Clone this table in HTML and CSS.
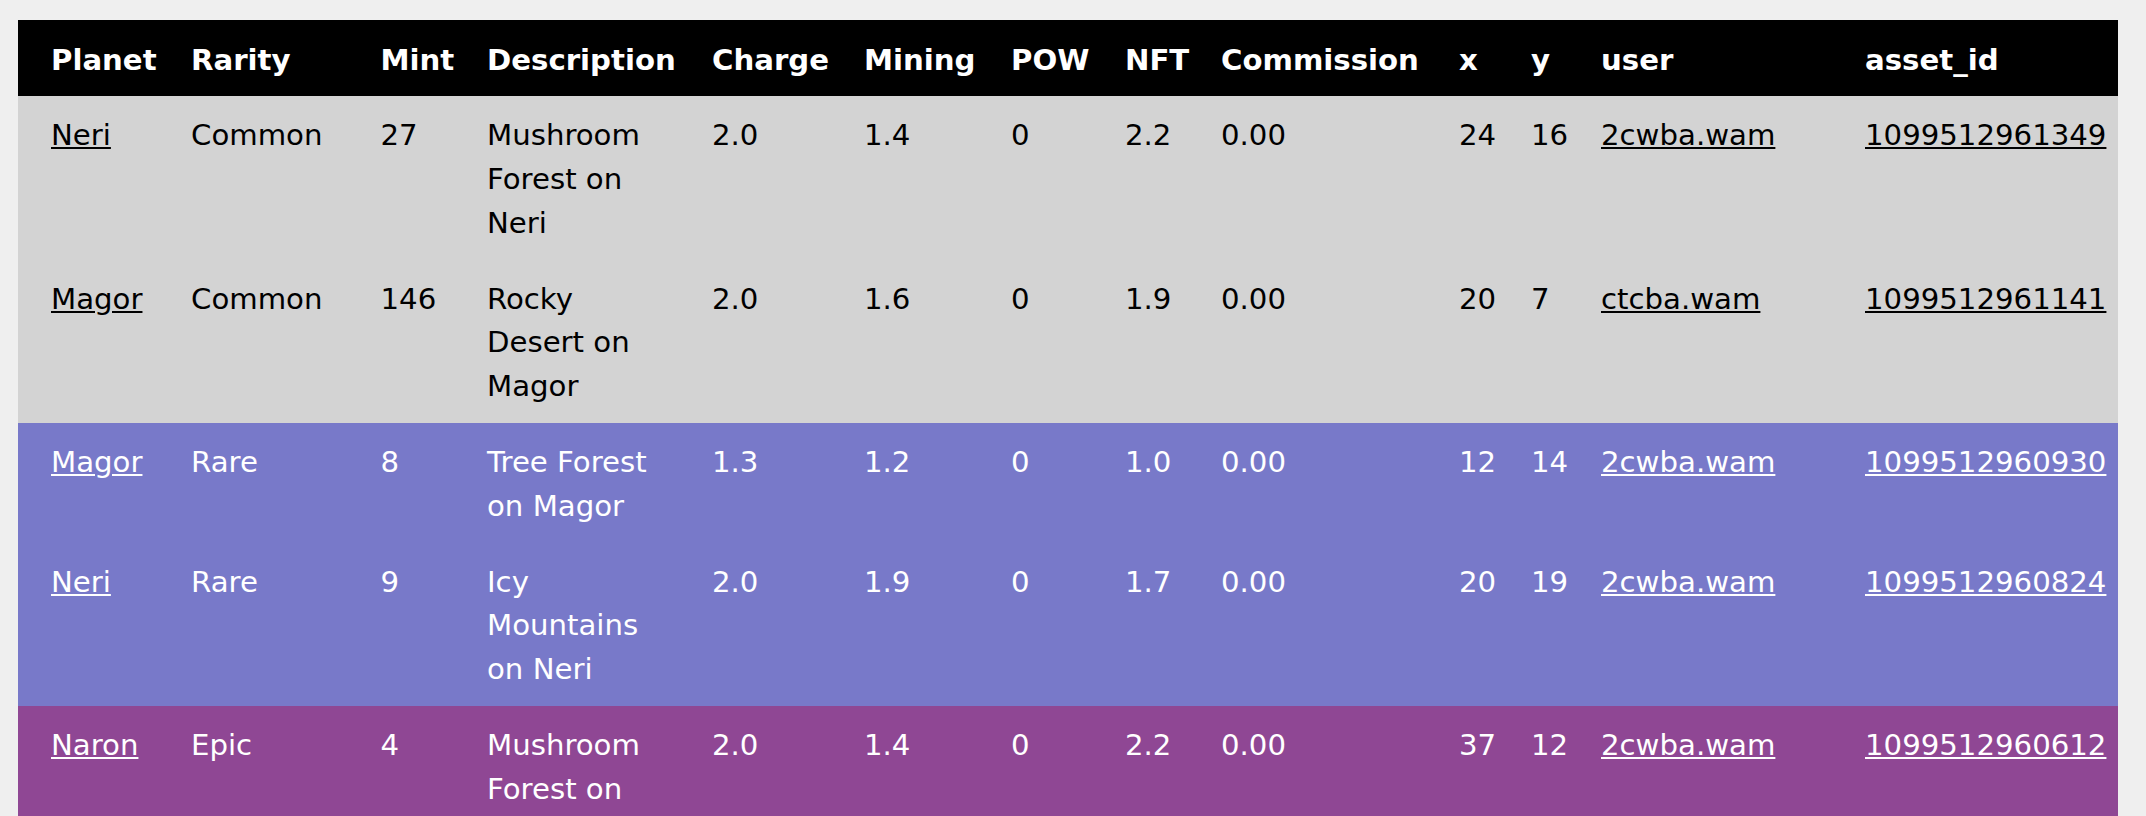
FILE: index.html
```html
<!DOCTYPE html>
<html lang="en">
<head>
<meta charset="utf-8">
<title>Lands</title>
<link rel="stylesheet" href="styles.css">
</head>
<body>
<table class="lands">
  <colgroup>
    <col class="c-planet">
    <col class="c-rarity">
    <col class="c-mint">
    <col class="c-desc">
    <col class="c-charge">
    <col class="c-mining">
    <col class="c-pow">
    <col class="c-nft">
    <col class="c-comm">
    <col class="c-x">
    <col class="c-y">
    <col class="c-user">
    <col class="c-asset">
  </colgroup>
  <thead>
    <tr>
      <th>Planet</th><th>Rarity</th><th>Mint</th><th>Description</th><th>Charge</th><th>Mining</th><th>POW</th><th>NFT</th><th>Commission</th><th>x</th><th>y</th><th>user</th><th>asset_id</th>
    </tr>
  </thead>
  <tbody>
    <tr class="common">
      <td><a href="#">Neri</a></td><td>Common</td><td>27</td><td>Mushroom Forest on Neri</td><td>2.0</td><td>1.4</td><td>0</td><td>2.2</td><td>0.00</td><td>24</td><td>16</td><td><a href="#">2cwba.wam</a></td><td><a href="#">1099512961349</a></td>
    </tr>
    <tr class="common">
      <td><a href="#">Magor</a></td><td>Common</td><td>146</td><td>Rocky Desert on Magor</td><td>2.0</td><td>1.6</td><td>0</td><td>1.9</td><td>0.00</td><td>20</td><td>7</td><td><a href="#">ctcba.wam</a></td><td><a href="#">1099512961141</a></td>
    </tr>
    <tr class="rare">
      <td><a href="#">Magor</a></td><td>Rare</td><td>8</td><td>Tree Forest on Magor</td><td>1.3</td><td>1.2</td><td>0</td><td>1.0</td><td>0.00</td><td>12</td><td>14</td><td><a href="#">2cwba.wam</a></td><td><a href="#">1099512960930</a></td>
    </tr>
    <tr class="rare">
      <td><a href="#">Neri</a></td><td>Rare</td><td>9</td><td>Icy Mountains on Neri</td><td>2.0</td><td>1.9</td><td>0</td><td>1.7</td><td>0.00</td><td>20</td><td>19</td><td><a href="#">2cwba.wam</a></td><td><a href="#">1099512960824</a></td>
    </tr>
    <tr class="epic">
      <td><a href="#">Naron</a></td><td>Epic</td><td>4</td><td>Mushroom Forest on Naron</td><td>2.0</td><td>1.4</td><td>0</td><td>2.2</td><td>0.00</td><td>37</td><td>12</td><td><a href="#">2cwba.wam</a></td><td><a href="#">1099512960612</a></td>
    </tr>
  </tbody>
</table>
</body>
</html>
```
FILE: styles.css
```css
html, body {
  background: #efefef;
}
body {
  margin: 20px 28px 0 18px;
  font-family: "DejaVu Sans", Verdana, sans-serif;
  font-size: 29.2px;
  line-height: 43.8px;
}
.lands {
  width: 2100px;
  table-layout: fixed;
  border-collapse: collapse;
  border-spacing: 0;
}
.c-planet { width: 140px; }
.c-rarity { width: 189.5px; }
.c-mint { width: 106.5px; }
.c-desc { width: 225px; }
.c-charge { width: 152px; }
.c-mining { width: 147px; }
.c-pow { width: 114px; }
.c-nft { width: 96px; }
.c-comm { width: 238px; }
.c-x { width: 72px; }
.c-y { width: 70px; }
.c-user { width: 264px; }
.c-asset { width: 286px; }

.lands th,
.lands td {
  padding: 18.5px 0 13.5px 33px;
  text-align: left;
  vertical-align: top;
  white-space: normal;
}
.lands th {
  background: #000;
  color: #fff;
  font-weight: bold;
}
.lands td {
  font-weight: normal;
}
.lands .id {
  letter-spacing: 0.3px;
}
.lands a {
  color: inherit;
  text-decoration: underline;
}
.common td {
  background: #d3d3d3;
  color: #000;
}
.rare td {
  background: #7879c9;
  color: #fff;
}
.epic td {
  background: #8f4794;
  color: #fff;
}
```
